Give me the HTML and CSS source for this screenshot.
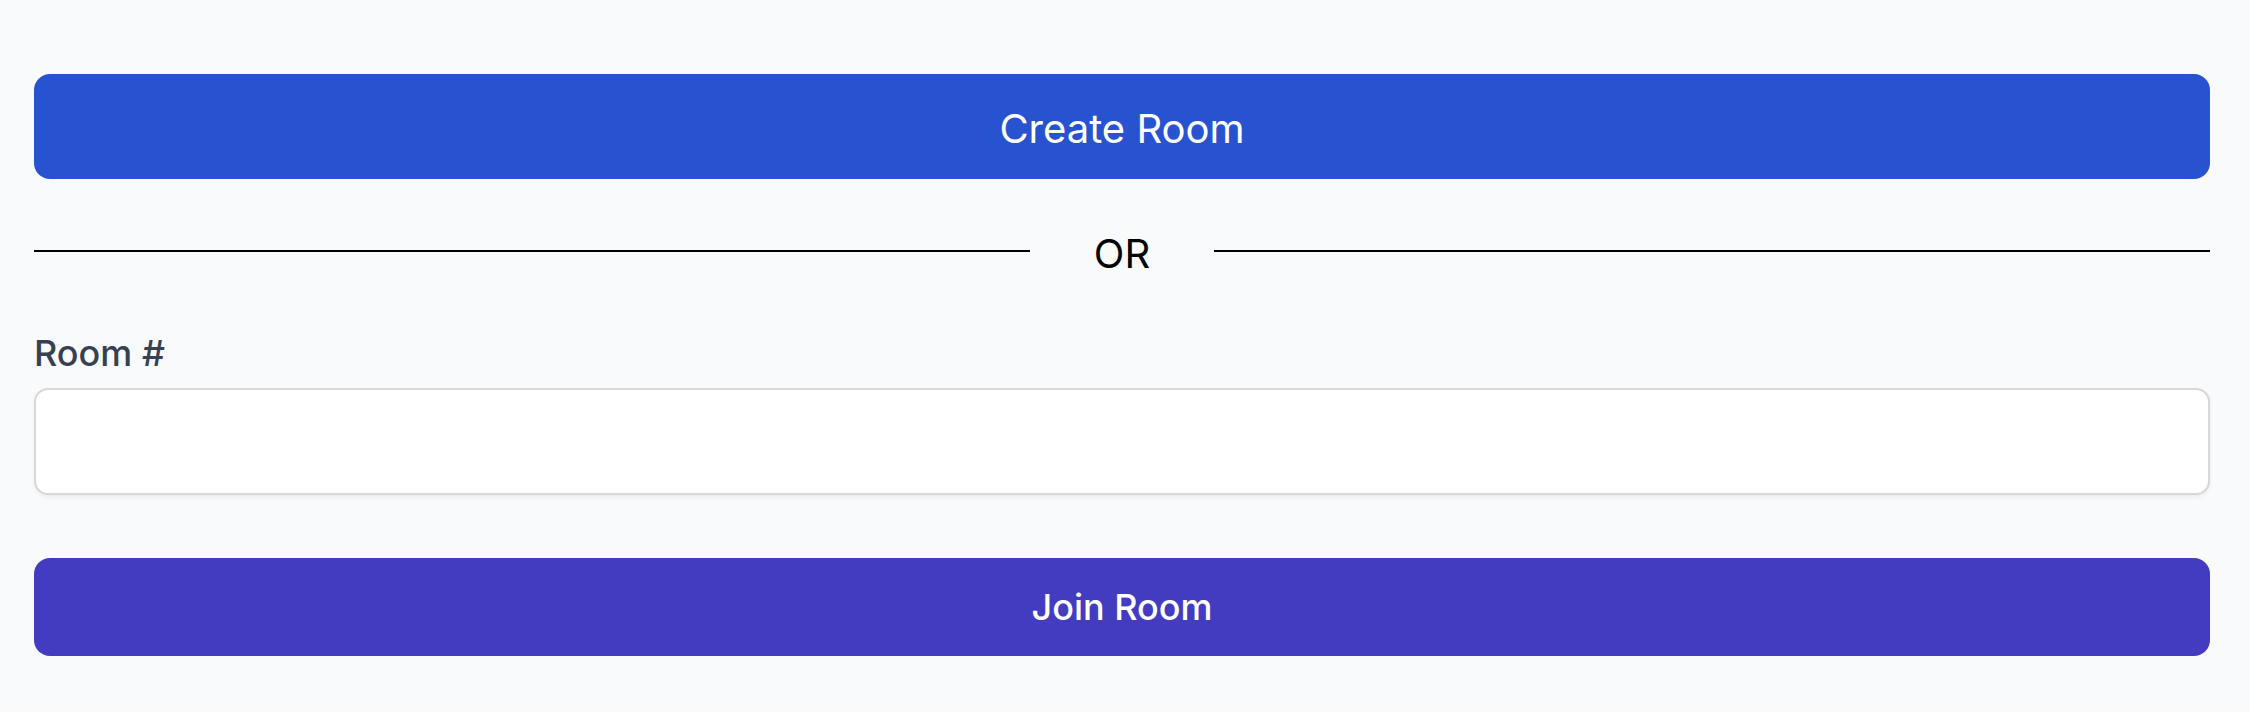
FILE: index.html
```html
<!DOCTYPE html>
<html lang="en">
<head>
    <meta charset="UTF-8">
    <meta name="viewport" content="width=device-width, initial-scale=1.0">
    <title>Rooms</title>
    <link rel="stylesheet" href="styles.css">
</head>
<body>
    <div class="container">
        <button class="btn btn-create">Create Room</button>

        <div class="divider">
            <span class="divider-line"></span>
            <span class="divider-text">OR</span>
            <span class="divider-line"></span>
        </div>

        <label for="room" class="field-label">Room #</label>
        <input id="room" type="text" class="field-input">

        <button class="btn btn-join">Join Room</button>
    </div>
</body>
</html>
```

FILE: styles.css
```css
body {
    margin: 0;
    background-color: #f9fafb;
    font-family: 'Inter', 'Noto Sans', sans-serif;
}
.container {
    display: flex;
    flex-direction: column;
    padding: 74px 40px 0 34px;
}
.btn {
    width: 100%;
    border: none;
    border-radius: 16px;
    color: #fff;
    font-family: inherit;
    cursor: pointer;
}
.btn-create {
    height: 105px;
    padding-top: 5px;
    background-color: #2853d0;
    font-size: 40px;
    font-weight: 400;
}
.btn-join {
    height: 98px;
    margin-top: 63px;
    background-color: #433cc0;
    font-size: 36px;
    font-weight: 500;
}
.divider {
    display: flex;
    align-items: center;
    height: 50px;
    margin-top: 47px;
}
.divider-line {
    flex: 1;
    border-top: 2px solid #000;
}
.divider-text {
    padding: 5px 64px 0;
    font-size: 40px;
    color: #000;
}
.field-label {
    margin-top: 55px;
    font-size: 36px;
    line-height: 44px;
    font-weight: 500;
    color: #374151;
}
.field-input {
    height: 107px;
    margin-top: 13px;
    box-sizing: border-box;
    border: 2px solid #d5d7db;
    border-radius: 14px;
    background: #fff;
    box-shadow: 0 2px 4px rgba(0, 0, 0, 0.06);
    font-size: 36px;
    padding: 0 24px;
}
```
